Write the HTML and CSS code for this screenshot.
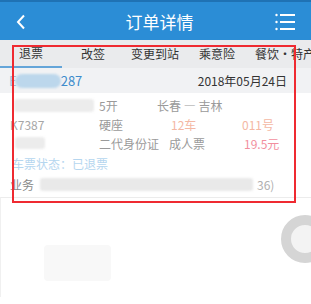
FILE: index.html
```html
<!DOCTYPE html>
<html lang="zh">
<head>
<meta charset="utf-8">
<title>订单详情</title>
<link rel="stylesheet" href="styles.css">
</head>
<body>
<div class="app">
  <header class="topbar">
    <svg class="back" width="10" height="16" viewBox="0 0 10 16"><path d="M8 1.5 L2 8 L8 14.5" fill="none" stroke="#fff" stroke-width="2"/></svg>
    <h1 class="title">订单详情</h1>
    <svg class="menu" width="22" height="18" viewBox="0 0 22 18">
      <circle cx="1.5" cy="2" r="1.2" fill="#fff"/>
      <circle cx="1.5" cy="9" r="1.2" fill="#fff"/>
      <circle cx="1.5" cy="16" r="1.2" fill="#fff"/>
      <rect x="5" y="1" width="15" height="2" fill="#fff"/>
      <rect x="5" y="8" width="15" height="2" fill="#fff"/>
      <rect x="5" y="15" width="15" height="2" fill="#fff"/>
    </svg>
  </header>
  <nav class="tabs">
    <div class="tab active">退票</div>
    <div class="tab">改签</div>
    <div class="tab">变更到站</div>
    <div class="tab">乘意险</div>
    <div class="tab last">餐饮·特产</div>
  </nav>
  <div class="orderbar">
    <div class="orderno"><span class="e">E</span><span class="blob"></span><span>287</span></div>
    <div class="date">2018年05月24日</div>
  </div>
  <section class="detail">
    <div class="row r1">
      <span class="blur b1"></span>
      <span class="c2">5开</span>
      <span class="route">长春 — 吉林</span>
    </div>
    <div class="row">
      <span class="c1 gray">K7387</span>
      <span class="c2">硬座</span>
      <span class="c3 orange">12车</span>
      <span class="c4 orange">011号</span>
    </div>
    <div class="row">
      <span class="c1"><span class="blur b3"></span></span>
      <span class="c2">二代身份证</span>
      <span class="c3b">成人票</span>
      <span class="c4 pink">19.5元</span>
    </div>
    <div class="row tall status">车票状态：已退票</div>
    <div class="row tall biz">
      <span class="bizlabel">业务</span><span class="blur b5"></span><span class="tail">36)</span>
    </div>
  </section>
  <div class="below">
    <div class="ghost"></div>
  </div>
  <div class="ring"></div>
  <div class="mark"></div>
</div>
</body>
</html>
```

FILE: styles.css
```css
* { box-sizing: border-box; margin: 0; padding: 0; }
html, body { width: 311px; height: 304px; overflow: hidden; background: #fff; }
body { font-family: "Noto Sans CJK SC", "Noto Sans", sans-serif; font-size: 12px; color: #333; }
.app { position: relative; width: 311px; height: 304px; overflow: hidden; }

.topbar {
  height: 40px;
  background: #2b8dd6;
  border-top: 2px solid #1f72b4;
  display: flex;
  align-items: center;
  justify-content: space-between;
  padding: 0 14px 0 16px;
  color: #fff;
}
.back { margin-top: 1px; }
.title { font-size: 17px; font-weight: normal; line-height: 1; margin-left: 18px; }
.menu { margin-top: 2px; }

.tabs {
  height: 28px;
  background: #eaebed;
  display: flex;
  white-space: nowrap;
  overflow: hidden;
}
.tab { flex: 0 0 62px; text-align: center; line-height: 27px; font-size: 12px; color: #333; }
.tab.active { border-bottom: 2px solid #64a5d9; line-height: 26px; }
.tab.last { text-align: left; padding-left: 7px; flex: 0 0 70px; }

.orderbar {
  height: 25px;
  background: #f1f2f4;
  display: flex;
  align-items: center;
  justify-content: space-between;
  padding: 0 24px 0 9px;
}
.orderno { display: flex; align-items: center; color: #3d8ccc; font-size: 13px; }
.orderno .e { color: #9dbcd6; }
.orderno .blob { display: inline-block; width: 46px; height: 14px; margin-left: -2px; background: #bcd7ec; border-radius: 7px; filter: blur(1px); }
.date { font-size: 12px; color: #333; }

.detail { padding: 3px 0 2px 10px; color: #9a9a9a; }
.row { display: flex; align-items: center; height: 19px; font-size: 12px; }
.row.tall { height: 21px; }
.c1 { width: 89px; }
.c2 { width: 70px; }
.c3 { width: 73px; padding-left: 2px; }
.c3b { width: 75px; }
.c4 { }
.r1 .c2 { width: 58px; }
.gray { color: #a6a6a6; }
.orange { color: #f4b8a4; }
.pink { color: #f28f9e; }
.blur { display: inline-block; background: #ececec; border-radius: 3px; filter: blur(1px); }
.b1 { width: 80px; height: 13px; margin-left: 4px; margin-right: 5px; }
.b3 { width: 30px; height: 12px; margin-left: 5px; }
.status { color: #b5d6ef; padding-left: 2px; }
.biz { color: #8a8a8a; }
.bizlabel { width: 30px; }
.b5 { width: 213px; height: 13px; background: #e9e9e9; }
.tail { color: #b0b0b0; margin-left: 4px; }

.below {
  border-top: 1px solid #ececec;
  border-left: 1px solid #f0f0f0;
  height: 100px;
  position: relative;
}
.ghost { margin: 47px 0 0 43px; width: 67px; height: 36px; background: #f8f8f8; border-radius: 4px; }

.ring {
  position: absolute;
  left: 281px;
  top: 215px;
  width: 48px;
  height: 48px;
  border-radius: 50%;
  border: 10px solid #d5d5d5;
  background: #f3f3f3;
}
.mark {
  position: absolute;
  left: 12px;
  top: 45px;
  width: 284px;
  height: 158px;
  border: 2px solid #ef2a31;
}
```
